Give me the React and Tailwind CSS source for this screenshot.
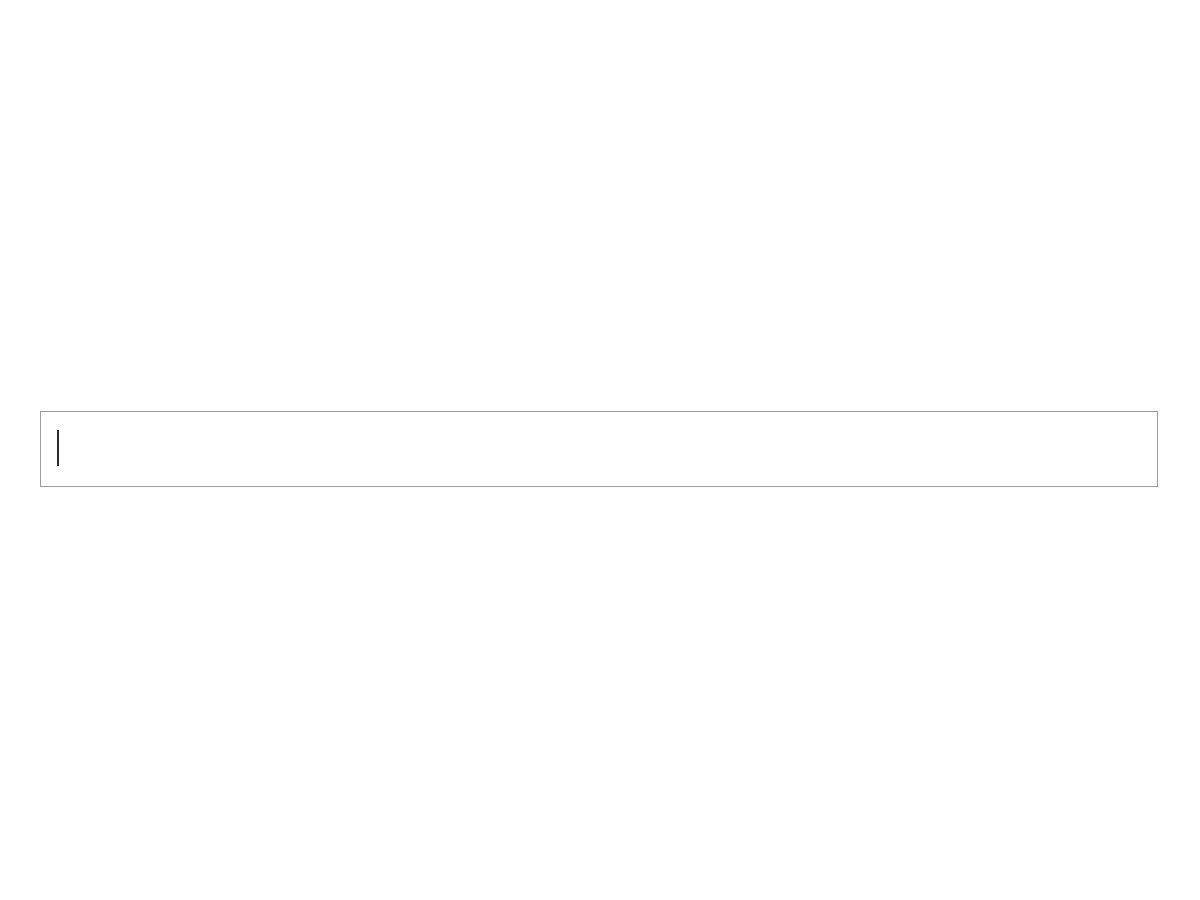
import React from 'react';

const App = () => {
  return (
    <div className="min-h-screen bg-white flex items-center pb-[2px] px-10">
      {/* Empty text field with caret */}
      <div className="w-[1118px] h-[76px] border border-[#9c9c9c] bg-white flex items-start pt-[18px] pl-4">
        <span className="block w-[2px] h-[36px] bg-[#2b2b2b]"></span>
      </div>
    </div>
  );
};

export default App;
